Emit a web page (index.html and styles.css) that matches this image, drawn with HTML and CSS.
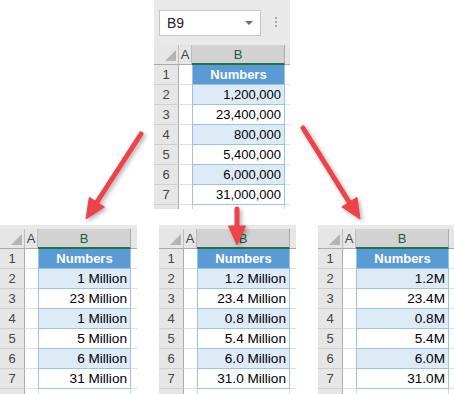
FILE: index.html
```html
<!DOCTYPE html>
<html>
<head>
<meta charset="utf-8">
<link rel="stylesheet" href="styles.css">
</head>
<body>
<div class="page">
  <div class="top-row">
    <div class="sheet sheet-top">
      <div class="formula">
        <div class="namebox"><span>B9</span><span class="caret"></span></div>
        <div class="dots"><i></i><i></i><i></i></div>
      </div>
      <div class="grid">
        <div class="c corner"><span class="tri"></span></div>
        <div class="c colh">A</div>
        <div class="c colh sel">B</div>
        <div class="c xh"></div>

        <div class="c rh">1</div><div class="c a"></div><div class="c b hd">Numbers</div><div class="c x"></div>
        <div class="c rh">2</div><div class="c a"></div><div class="c b alt">1,200,000</div><div class="c x"></div>
        <div class="c rh">3</div><div class="c a"></div><div class="c b">23,400,000</div><div class="c x"></div>
        <div class="c rh">4</div><div class="c a"></div><div class="c b alt">800,000</div><div class="c x"></div>
        <div class="c rh">5</div><div class="c a"></div><div class="c b">5,400,000</div><div class="c x"></div>
        <div class="c rh">6</div><div class="c a"></div><div class="c b alt">6,000,000</div><div class="c x"></div>
        <div class="c rh">7</div><div class="c a"></div><div class="c b">31,000,000</div><div class="c x"></div>
        <div class="c rh end"></div><div class="c a end"></div><div class="c b end"></div><div class="c x end"></div>
      </div>
    </div>
  </div>

  <div class="bottom-row">
    <div class="sheet sheet-bottom">
      <div class="strip"></div>
      <div class="grid">
        <div class="c corner"><span class="tri"></span></div>
        <div class="c colh">A</div>
        <div class="c colh sel">B</div>
        <div class="c xh"></div>

        <div class="c rh">1</div><div class="c a"></div><div class="c b hd">Numbers</div><div class="c x"></div>
        <div class="c rh">2</div><div class="c a"></div><div class="c b alt">1 Million</div><div class="c x"></div>
        <div class="c rh">3</div><div class="c a"></div><div class="c b">23 Million</div><div class="c x"></div>
        <div class="c rh">4</div><div class="c a"></div><div class="c b alt">1 Million</div><div class="c x"></div>
        <div class="c rh">5</div><div class="c a"></div><div class="c b">5 Million</div><div class="c x"></div>
        <div class="c rh">6</div><div class="c a"></div><div class="c b alt">6 Million</div><div class="c x"></div>
        <div class="c rh">7</div><div class="c a"></div><div class="c b">31 Million</div><div class="c x"></div>
        <div class="c rh end"></div><div class="c a end"></div><div class="c b end"></div><div class="c x end"></div>
      </div>
    </div>

    <div class="sheet sheet-bottom">
      <div class="strip"></div>
      <div class="grid">
        <div class="c corner"><span class="tri"></span></div>
        <div class="c colh">A</div>
        <div class="c colh sel">B</div>
        <div class="c xh"></div>

        <div class="c rh">1</div><div class="c a"></div><div class="c b hd">Numbers</div><div class="c x"></div>
        <div class="c rh">2</div><div class="c a"></div><div class="c b alt">1.2 Million</div><div class="c x"></div>
        <div class="c rh">3</div><div class="c a"></div><div class="c b">23.4 Million</div><div class="c x"></div>
        <div class="c rh">4</div><div class="c a"></div><div class="c b alt">0.8 Million</div><div class="c x"></div>
        <div class="c rh">5</div><div class="c a"></div><div class="c b">5.4 Million</div><div class="c x"></div>
        <div class="c rh">6</div><div class="c a"></div><div class="c b alt">6.0 Million</div><div class="c x"></div>
        <div class="c rh">7</div><div class="c a"></div><div class="c b">31.0 Million</div><div class="c x"></div>
        <div class="c rh end"></div><div class="c a end"></div><div class="c b end"></div><div class="c x end"></div>
      </div>
    </div>

    <div class="sheet sheet-bottom sheet-narrow">
      <div class="strip"></div>
      <div class="grid">
        <div class="c corner"><span class="tri"></span></div>
        <div class="c colh">A</div>
        <div class="c colh sel">B</div>
        <div class="c xh"></div>

        <div class="c rh">1</div><div class="c a"></div><div class="c b hd">Numbers</div><div class="c x"></div>
        <div class="c rh">2</div><div class="c a"></div><div class="c b alt">1.2M</div><div class="c x"></div>
        <div class="c rh">3</div><div class="c a"></div><div class="c b">23.4M</div><div class="c x"></div>
        <div class="c rh">4</div><div class="c a"></div><div class="c b alt">0.8M</div><div class="c x"></div>
        <div class="c rh">5</div><div class="c a"></div><div class="c b">5.4M</div><div class="c x"></div>
        <div class="c rh">6</div><div class="c a"></div><div class="c b alt">6.0M</div><div class="c x"></div>
        <div class="c rh">7</div><div class="c a"></div><div class="c b">31.0M</div><div class="c x"></div>
        <div class="c rh end"></div><div class="c a end"></div><div class="c b end"></div><div class="c x end"></div>
      </div>
    </div>
  </div>

  <svg class="arrows" width="454" height="394" viewBox="0 0 454 394">
    <g class="arrow">
      <line x1="141" y1="134" x2="97" y2="202"/>
      <polygon points="86,219 104.4,207.1 89.3,197.3"/>
    </g>
    <g class="arrow">
      <line x1="237" y1="209" x2="237" y2="228"/>
      <polygon points="237,245 228.5,226 245.5,226"/>
    </g>
    <g class="arrow">
      <line x1="303" y1="128" x2="349" y2="202"/>
      <polygon points="360,219 341.8,206.9 357,197.3"/>
    </g>
  </svg>
</div>
</body>
</html>
```

FILE: styles.css
```css
* {
  box-sizing: border-box;
  margin: 0;
  padding: 0;
}

body {
  background: #ffffff;
  font-family: "Liberation Sans", Arial, sans-serif;
  font-size: 13px;
  color: #000000;
}

.page {
  position: relative;
  width: 454px;
  height: 394px;
  overflow: hidden;
  display: flex;
  flex-direction: column;
  gap: 16px;
}

.top-row {
  padding-left: 154px;
}

.sheet {
  width: 137px;
  background: #E9E9E9;
  display: flex;
  flex-direction: column;
  flex-shrink: 0;
}

.sheet-top {
  width: 136px;
  height: 209px;
}

.formula {
  height: 45px;
  display: flex;
  align-items: flex-start;
  gap: 14px;
  padding: 10px 0 0 5px;
}

.namebox {
  width: 102px;
  height: 26px;
  background: #ffffff;
  border: 1px solid #C6C6C6;
  display: flex;
  align-items: center;
  justify-content: space-between;
  padding: 0 7px 0 7px;
  color: #222222;
  font-size: 14px;
}

.caret {
  width: 0;
  height: 0;
  border-left: 4px solid transparent;
  border-right: 4px solid transparent;
  border-top: 4px solid #6F6F6F;
}

.dots {
  display: flex;
  flex-direction: column;
  gap: 2px;
  padding-top: 7px;
}

.dots i {
  display: block;
  width: 2px;
  height: 2px;
  background: #A8A8A8;
}

.bottom-row {
  display: flex;
  justify-content: space-between;
}

.sheet-bottom {
  height: 169px;
}

.sheet-narrow {
  width: 136px;
}

.strip {
  height: 4px;
  flex-shrink: 0;
}

.grid {
  flex: 1;
  display: grid;
  grid-template-columns: 25px 13px 93px 1fr;
  grid-template-rows: repeat(8, 20px) 1fr;
  min-height: 0;
}

.c {
  display: flex;
  align-items: center;
  overflow: hidden;
  white-space: nowrap;
  border-bottom: 1px solid #E1E1E1;
}

.corner {
  background: #E6E6E6;
  border-right: 1px solid #BDBDBD;
  border-bottom: 1px solid #ABABAB;
  justify-content: flex-end;
  align-items: flex-end;
  padding: 0 2px 3px 0;
}

.tri {
  display: block;
  width: 11px;
  height: 11px;
  background: #B5B5B5;
  clip-path: polygon(100% 0, 100% 100%, 0 100%);
}

.colh {
  background: #E6E6E6;
  justify-content: center;
  color: #444444;
  border-right: 1px solid #BDBDBD;
  border-bottom: 1px solid #ABABAB;
}

.colh.sel {
  background: #D2D2D2;
  color: #1E5A3C;
  border-right: 1px solid #ABABAB;
  border-bottom: 2px solid #217346;
}

.xh {
  background: #E6E6E6;
  border-bottom: 1px solid #ABABAB;
}

.rh {
  background: #E6E6E6;
  justify-content: center;
  color: #444444;
  border-right: 1px solid #ABABAB;
  border-bottom: 1px solid #D0D0D0;
}

.a {
  background: #ffffff;
}

.x {
  background: #ffffff;
}

.b {
  background: #ffffff;
  justify-content: flex-end;
  padding-right: 3px;
  border-left: 1px solid #9BC2E6;
  border-right: 1px solid #9BC2E6;
  border-bottom: 1px solid #9BC2E6;
}

.sheet-bottom .b {
  font-size: 13.6px;
}

.b.hd,
.sheet-bottom .b.hd {
  background: #5B9BD5;
  color: #ffffff;
  font-weight: bold;
  font-size: 13px;
  justify-content: center;
  padding-right: 0;
}

.b.alt {
  background: #DDEBF7;
}

.end {
  border-bottom: none;
}

.b.end {
  border-left-color: #D4D4D4;
  border-right-color: #D4D4D4;
}

.arrows {
  position: absolute;
  left: 0;
  top: 0;
  pointer-events: none;
  filter: drop-shadow(2px 2px 2px rgba(0, 0, 0, 0.3));
}

.arrow line {
  stroke: #EF4349;
  stroke-width: 5;
  stroke-linecap: round;
}

.arrow polygon {
  fill: #EF4349;
  stroke: #EF4349;
  stroke-width: 1;
  stroke-linejoin: round;
}
```
